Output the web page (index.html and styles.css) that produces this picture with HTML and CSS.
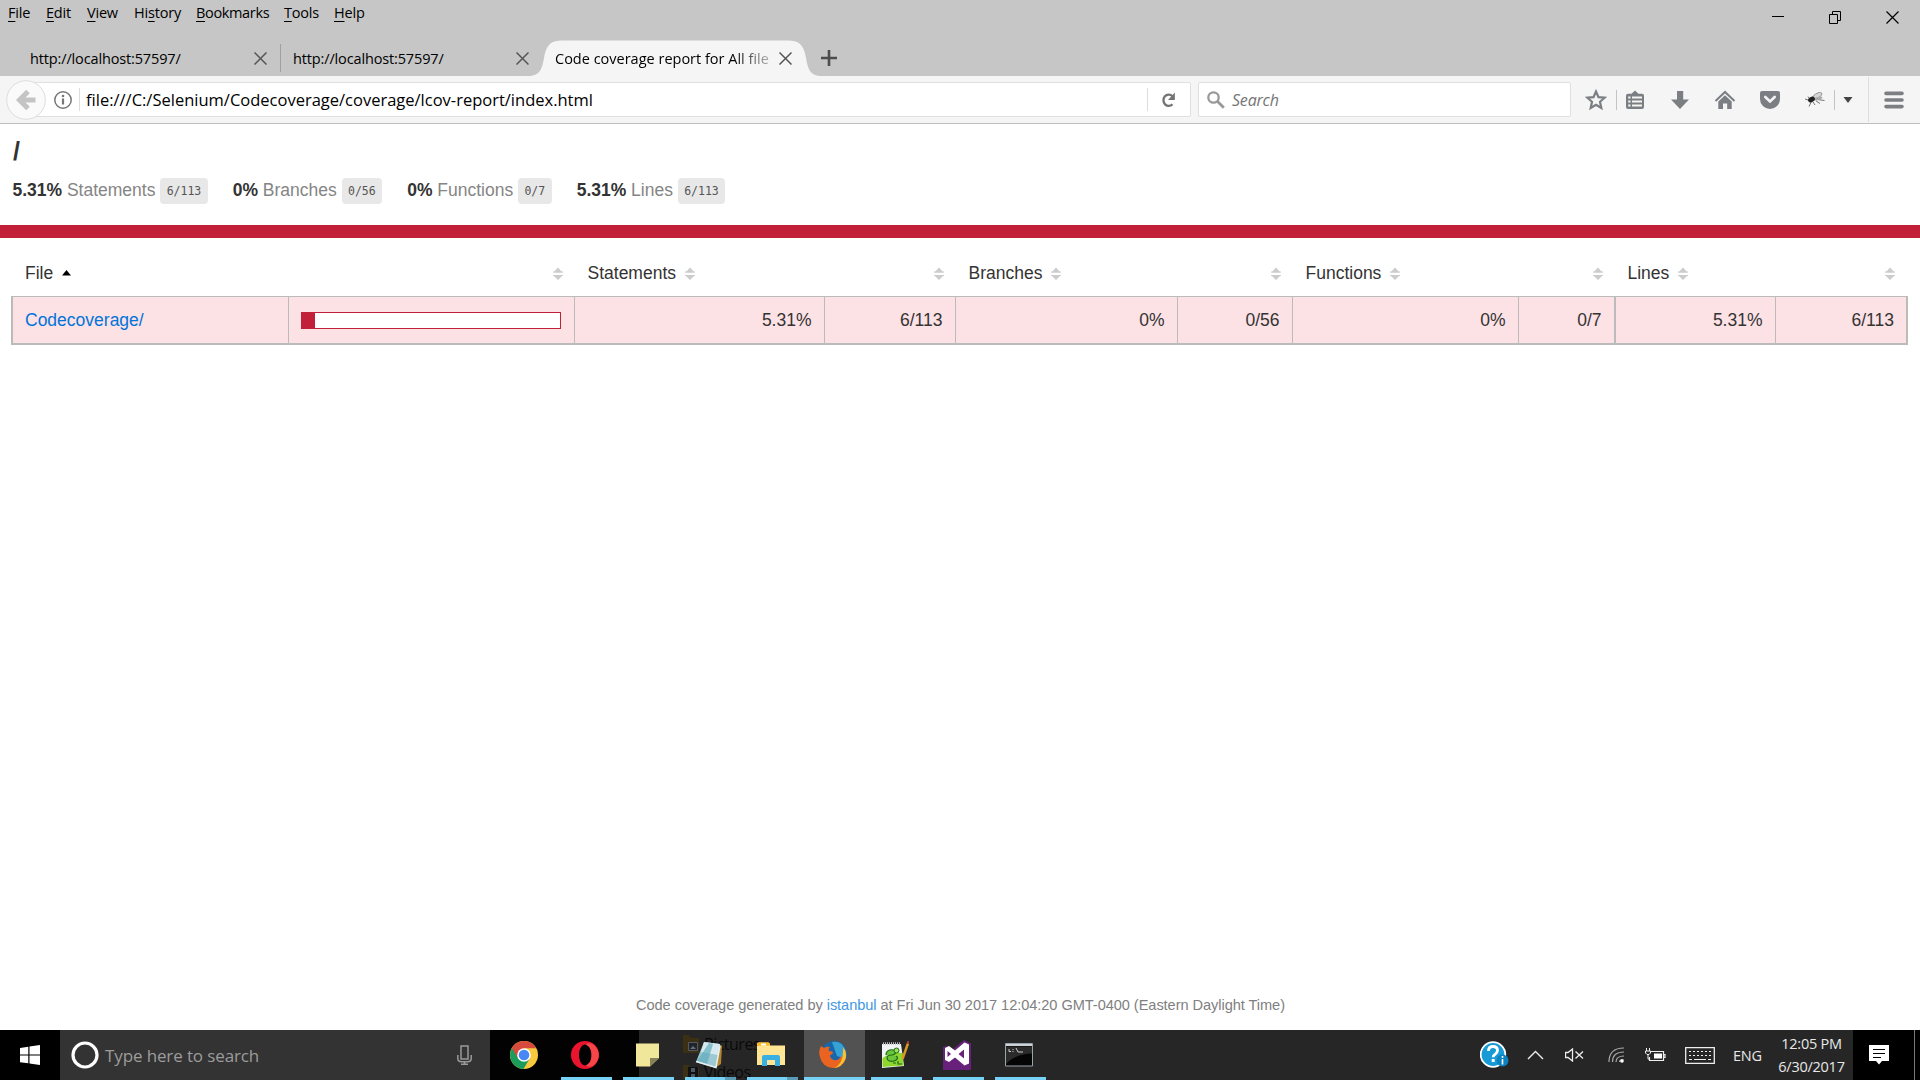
FILE: index.html
```html
<!DOCTYPE html>
<html lang="en">
<head>
<meta charset="utf-8">
<title>Code coverage report for All files</title>
<link rel="stylesheet" href="styles.css">
</head>
<body>
<svg class="defs" width="0" height="0">
  <symbol id="close" viewBox="0 0 13 13"><path d="M.5.5l12 12M12.5.5l-12 12" fill="none" stroke="#555" stroke-width="1.5"/></symbol>
  <symbol id="sort" viewBox="0 0 10 12"><path d="M5 0l4.500 5H.5zM.5 8h9L5 12.500z" fill="#ccc"/><path d="M0 4.500h10M0 8h10" stroke="#ccc"/></symbol>
</svg>

<header class="titlebar">
  <div class="menu-row">
    <nav class="menu">
      <span class="m1"><u>F</u>ile</span><span class="m2"><u>E</u>dit</span><span class="m3"><u>V</u>iew</span><span class="m4">Hi<u>s</u>tory</span><span class="m5"><u>B</u>ookmarks</span><span class="m6"><u>T</u>ools</span><span class="m7"><u>H</u>elp</span>
    </nav>
    <div class="window-buttons">
      <svg width="13" height="13"><path d="M0 5.500h12" stroke="#000"/></svg>
      <svg width="13" height="13"><path d="M.5 3.500h8v9h-8zM3.500 3V.5h8v9H9" fill="none" stroke="#000"/></svg>
      <svg width="13" height="13"><path d="M.5.5l12 12M12.500.5l-12 12" stroke="#000" stroke-width="1.200"/></svg>
    </div>
  </div>
  <div class="tabs">
    <div class="tab tab-one"><span>http://localhost:57597/</span><svg width="13" height="13"><use href="#close"/></svg></div>
    <div class="tab tab-two"><span>http://localhost:57597/</span><svg width="13" height="13"><use href="#close"/></svg></div>
    <div class="tab tab-active">
      <svg class="tab-shape" width="294" height="36" viewBox="0 0 294 36"><path d="M0 36C12 36 14 29 16 18C18 6 22 .5 34 .5H260C272 .5 276 6 278 18C280 29 282 36 294 36z" fill="#f5f5f5"/></svg>
      <span class="fade">Code coverage report for All file</span><svg class="tab-close" width="13" height="13"><use href="#close"/></svg>
    </div>
    <svg class="new-tab" width="16" height="16"><path d="M8 0v16M0 8h16" stroke="#4d4d4d" stroke-width="2.600"/></svg>
  </div>
</header>

<div class="toolbar">
  <svg class="back" width="40" height="40"><circle cx="20" cy="20" r="19.300" fill="#fafafa" stroke="#ddd"/><path d="M22 11.500L13.500 20L22 28.500M14 20h15.500" fill="none" stroke="#c4c4c4" stroke-width="5"/></svg>
  <div class="url">
    <svg width="18" height="18"><circle cx="9" cy="9" r="8.200" fill="none" stroke="#777" stroke-width="1.500"/><path d="M9 7.500v6" stroke="#777" stroke-width="2.200"/><circle cx="9" cy="5" r="1.300" fill="#777"/></svg>
    <i class="bar"></i>
    <span class="address">file:///C:/Selenium/Codecoverage/coverage/lcov-report/index.html</span>
    <i class="bar reload-bar"></i>
    <svg width="15" height="16"><path d="M11.500 12.300A5.300 5.700 0 1 1 11.300 4" fill="none" stroke="#737373" stroke-width="2.300"/><path d="M13.800.5V8H7z" fill="#737373"/></svg>
  </div>
  <div class="search">
    <svg width="18" height="18"><circle cx="6.500" cy="6.500" r="5.200" fill="none" stroke="#999" stroke-width="2.300"/><path d="M10.300 10.300l6.500 6.500" stroke="#999" stroke-width="2.800"/></svg>
    <span>Search</span>
  </div>
  <div class="tools">
    <svg class="t-star" width="22" height="22"><path d="M11 2.500l2.500 5.600 6.100.6-4.600 4.100 1.300 6.100L11 15.700l-5.300 3.200L7 12.800 2.400 8.700l6.100-.6z" fill="none" stroke="#7b7e82" stroke-width="2.200"/></svg>
    <i class="tool-bar"></i>
    <svg class="t-list" width="20" height="20"><path d="M3 3.800h3.500L10 .5l3.500 3.300H17A2 2 0 0 1 19 5.800V17a2 2 0 0 1-2 2H3a2 2 0 0 1-2-2V5.800a2 2 0 0 1 2-2z" fill="#7b7e82"/><path d="M3.200 7.500h2.300M7 7.500h10M3.200 11.500h2.300M7 11.500h10M3.200 15.500h2.300M7 15.500h10" stroke="#f5f5f5" stroke-width="2"/></svg>
    <svg class="t-down" width="20" height="20"><path d="M7 1h6.200v8.500H19L10 19 1 9.500h6z" fill="#7b7e82"/></svg>
    <svg class="t-home" width="22" height="20"><path d="M1.500 11L11 2l9.500 9" fill="none" stroke="#7b7e82" stroke-width="2"/><path d="M4.300 11.500L11 5.200l6.700 6.300V19h-4.500v-5.500H9V19H4.300z" fill="#7b7e82"/></svg>
    <svg class="t-pocket" width="22" height="20"><path d="M3 1h16q2 0 2 2v6a10 10 0 0 1-20 0V3q0-2 2-2z" fill="#7b7e82"/><path d="M6.300 7L11 11.500 15.700 7" fill="none" stroke="#f5f5f5" stroke-width="2.600" stroke-linecap="round"/></svg>
    <svg class="t-fly" width="20" height="18"><path d="M0 8l6 2M4 15.500l2.500-5M12 8.500l7.500 1M8 11l2 3M11 10l4 2.500M3 5.500l2 3" stroke="#666" stroke-width=".9"/><ellipse cx="12" cy="5" rx="5.500" ry="2.400" transform="rotate(-32 12 5)" fill="#d5d5d5" stroke="#888" stroke-width=".8"/><ellipse cx="13" cy="7.500" rx="4.500" ry="1.600" transform="rotate(-15 13 7.500)" fill="#aaa"/><ellipse cx="6.500" cy="8.500" rx="3.600" ry="2.600" transform="rotate(-30 6.500 8.500)" fill="#222"/></svg>
    <i class="tool-bar"></i>
    <svg class="t-caret" width="10" height="6"><path d="M.5 0h9L5 6z" fill="#444"/></svg>
    <i class="tool-bar tall"></i>
    <svg class="t-menu" width="20" height="18"><path d="M2 2.400h16M2 9h16M2 15.600h16" stroke="#7b7e82" stroke-width="3.600" stroke-linecap="round"/></svg>
  </div>
</div>

<main class="report">
  <h1>/</h1>
  <div class="metrics">
    <div><b>5.31%</b> <span>Statements</span> <code>6/113</code></div>
    <div><b>0%</b> <span>Branches</span> <code>0/56</code></div>
    <div><b>0%</b> <span>Functions</span> <code>0/7</code></div>
    <div><b>5.31%</b> <span>Lines</span> <code>6/113</code></div>
  </div>
  <div class="status-line"></div>
  <table class="coverage">
    <colgroup><col class="c1"><col class="c2"><col class="c3"><col class="c4"><col class="c5"><col class="c6"><col class="c7"><col class="c8"><col class="c9"><col class="c10"></colgroup>
    <thead><tr>
      <th>File<svg class="sorted" width="9" height="6"><path d="M4.500 0L9 5.500H0z" fill="#000"/></svg></th>
      <th class="end"><svg width="10" height="13"><use href="#sort"/></svg></th>
      <th>Statements<svg width="10" height="13"><use href="#sort"/></svg></th>
      <th class="end"><svg width="10" height="13"><use href="#sort"/></svg></th>
      <th>Branches<svg width="10" height="13"><use href="#sort"/></svg></th>
      <th class="end"><svg width="10" height="13"><use href="#sort"/></svg></th>
      <th>Functions<svg width="10" height="13"><use href="#sort"/></svg></th>
      <th class="end"><svg width="10" height="13"><use href="#sort"/></svg></th>
      <th>Lines<svg width="10" height="13"><use href="#sort"/></svg></th>
      <th class="end"><svg width="10" height="13"><use href="#sort"/></svg></th>
    </tr></thead>
    <tbody><tr>
      <td class="file"><a>Codecoverage/</a></td>
      <td class="pic"><div class="chart"><div class="fill" style="width:5%"></div></div></td>
      <td>5.31%</td><td>6/113</td><td>0%</td><td>0/56</td><td>0%</td><td>0/7</td><td class="heavy">5.31%</td><td>6/113</td>
    </tr></tbody>
  </table>
  <footer>Code coverage generated by <a>istanbul</a> at Fri Jun 30 2017 12:04:20 GMT-0400 (Eastern Daylight Time)</footer>
</main>

<div class="taskbar">
  <div class="start"><svg width="20" height="20"><path d="M0 3l8.300-1.200v7.700H0zM9.500 1.600L20 0v9.500H9.500zM0 10.500h8.300v7.800L0 17.200zM9.500 10.500H20V20L9.500 18.500z" fill="#fff"/></svg></div>
  <div class="cortana">
    <svg width="28" height="28"><circle cx="14" cy="14" r="12" fill="none" stroke="#fff" stroke-width="3.200"/></svg>
    <span>Type here to search</span>
    <svg width="15" height="20"><path d="M4 1h7v13H4z" fill="none" stroke="#999" stroke-width="1.500"/><path d="M.8 10v3.500q0 3.200 3.500 3.200h6.400q3.500 0 3.500-3.200V10M7.500 17v2.500M4 19.300h7" fill="none" stroke="#999" stroke-width="1.500"/></svg>
  </div>
  <div class="apps">
    <div class="ghost">
      <div class="ghost-one"><svg width="16" height="18"><path d="M0 0h6l2 3h8v15H0z" fill="#3b3014"/><path d="M5.500 7.500h9v8h-9z" fill="#20252b" stroke="#565b61"/><path d="M7 14l3-3 3 3z" fill="#667078"/></svg><span>Pictures</span></div>
      <div class="ghost-two"><svg width="16" height="14"><path d="M0 0h6l2 3h8v11H0z" fill="#3b3014"/><path d="M5 2h10v12H5z" fill="#111"/><path d="M8 3h4v4H8zM8 9h4v4H8z" fill="#4c5866"/></svg><span>Videos</span></div>
    </div>
    <div class="app"><svg width="28" height="28" viewBox="0 0 28 28"><circle cx="14" cy="14" r="14" fill="#f9ca3e"/><path d="M14 14L1.900 7A14 14 0 0 0 13.500 28L20 17z" fill="#1a9c5b"/><path d="M14 14L8 17.500 1.900 7A14 14 0 0 1 26.200 7.300H14z" fill="#d84a3c"/><circle cx="14" cy="14" r="6.800" fill="#fff"/><circle cx="14" cy="14" r="5.300" fill="#4788f4"/></svg></div>
    <div class="app open"><svg width="28" height="28" viewBox="0 0 28 28"><path fill-rule="evenodd" d="M14 0a14 14 0 1 0 0 28a14 14 0 1 0 0-28zM14.500 3.500c4 0 6 5 6 10.500s-2 10.500-6 10.500s-6.500-5-6.500-10.500s2.500-10.500 6.500-10.500z" fill="#e9142d"/><path d="M14.500 3.500q5-3 9 1c6 6 5.500 14-.5 19.500q-4 3-8.500.5c8-3 8-18 0-21z" fill="#f5474a"/></svg></div>
    <div class="app open"><svg width="28" height="28" viewBox="0 0 28 28"><path d="M3 2.500h23v14.500l-9 8.500H3z" fill="#f1e79b"/><path d="M26 17h-9v8.500z" fill="#87825a"/></svg></div>
    <div class="app open more"><svg width="28" height="28" viewBox="0 0 28 28"><path d="M25 4l2 1-1 18-6 4z" fill="#b58630"/><path d="M9 1l16 2-4 24L1 21z" fill="#9cc9d3"/><path d="M9 1l16 2-2 11L6 11z" fill="#d4eaee"/><path d="M14 2l4 1-6 20-10-3z" fill="#5ba7b8" opacity=".65"/><path d="M1 20.500l20 6 4-22" fill="none" stroke="#e6f0f1" stroke-width="1.500"/></svg></div>
    <div class="app open more"><svg width="28" height="28" viewBox="0 0 28 28"><path d="M0 3q0-1.500 1.500-1.500H11q2 0 2 3H28V24H0z" fill="#ffe594"/><path d="M0 5V3q0-1.500 1.500-1.500H11q2 0 2 3z" fill="#fabb1f"/><path d="M4 2.500h5v2H4z" fill="#fff"/><path d="M5 25V16q0-2 2-2H21q2 0 2 2v9h-5v-6h-8v6z" fill="#39afe2"/></svg></div>
    <div class="app open active"><svg width="28" height="28" viewBox="0 0 28 28"><circle cx="15" cy="13" r="13" fill="#1966a8"/><path d="M13 1q10-2 13 8q1 4-2 8l-6-2z" fill="#35a1d5"/><path d="M2 5l3 2q3-2 6-1-2 2-1 4 4 0 4 2-1 2-3 2 0 4 4 5 5 1 7-4 2 1 1 3 4-5 1-12 4 4 3 11A13.300 13.300 0 0 1 1 16Q-1 10 2 5z" fill="#ea6320"/><path d="M24 6q5 6 2 13-3 7-11 8 10-4 9-21z" fill="#fbc02d"/></svg></div>
    <div class="app open"><svg width="28" height="28" viewBox="0 0 28 28"><path d="M1 3h19l3 22-22 2z" fill="#f1f4f4"/><path d="M1.500 17q8-6 20-5l1 12.500-21 1.500z" fill="#8fd62f"/><path d="M2 2.500h18" stroke="#bbb" stroke-width="2.500" stroke-dasharray="1 1"/><path d="M5 14c0-6 7-6 9-4s-1 4-3 4-5 0-5 3 4 4 7 3 5-3 2-5" fill="#6cc53a" stroke="#1d6b18" stroke-width="1.200"/><circle cx="15.500" cy="9.500" r="2.500" fill="#9be05a" stroke="#1d6b18"/><path d="M12 22h3M17 20v3h4" fill="none" stroke="#1d6b18" stroke-width="1.200"/><path d="M27.500 1l-6 17" stroke="#d99a25" stroke-width="2.500"/><path d="M28 0l-1 3" stroke="#a33" stroke-width="2.500"/></svg></div>
    <div class="app open"><svg width="28" height="30" viewBox="0 0 28 30"><path d="M0 7l4-1 5 4L21 0l7 3.500V30H0z" fill="#68217a"/><path fill-rule="evenodd" d="M21.500 2.500L26 4.500v19l-4.500 2-9.500-8-6 4.500-4-2v-12l4-2 6 4.500zM21 9.500L15.500 14l5.500 4.500zM4.500 11v6l3.500-3z" fill="#fff"/></svg></div>
    <div class="app open"><svg width="28" height="24" viewBox="0 0 28 24"><path d="M.5.500h27v22.500H.5z" fill="#050505" stroke="#9aa4ab"/><path d="M1 2h26" stroke="#ccd3d6" stroke-width="2"/><path d="M1 3.500h26v7Q10 11 1 21z" fill="#2b2b2b"/><path d="M4 6v2.500h2M8 6v1M8 8v1M11 5l2 4M13 9h5" stroke="#ccc" fill="none"/></svg></div>
  </div>
  <div class="tray">
    <svg class="help" width="29" height="28"><circle cx="13" cy="13.500" r="12.300" fill="#189ad6" stroke="#fff" stroke-width="1.800"/><path d="M8.500 10q0-4.500 4.500-4.500t4.500 4q0 2-2.500 3.800-1.800 1.200-1.800 3M11.700 19.500h3" fill="none" stroke="#fff" stroke-width="2.800"/><circle cx="22.500" cy="19.500" r="6" fill="#0c83c0"/><path d="M22.500 18v5.500M22.500 15v2" stroke="#fff" stroke-width="1.600"/></svg>
    <svg class="chevron" width="17" height="10"><path d="M1 9l7.500-7.500L16 9" fill="none" stroke="#eee" stroke-width="1.400"/></svg>
    <svg class="speaker" width="19" height="14"><path d="M.5 4.500h2.500L7.500 1v12L3 9.500H.5z" fill="none" stroke="#eee" stroke-width="1.300"/><path d="M10.500 3.500l7.500 7M18 3.500l-7.500 7" stroke="#eee" stroke-width="1.300"/></svg>
    <svg class="wifi" width="17" height="16"><path d="M1 15Q1 1 16 1M4.500 15Q4.500 5 16 5M8 15q0-6 8-6M11.500 15q0-2.500 4-2.500" fill="none" stroke="#aaa" stroke-width="1.200"/><circle cx="14" cy="14" r="1.800" fill="#fff"/></svg>
    <svg class="battery" width="21" height="14"><path d="M6 3.500h12.500v9h-14V9M18.500 6.500h1.500v3h-1.500" fill="none" stroke="#eee" stroke-width="1.200"/><path d="M9 5.500h8v5H9z" fill="#fff"/><path d="M1.500 0v3M4.500 0v3M.5 3h5v2L4 6.500H2L.5 5zM3 7v4h2" fill="none" stroke="#eee"/></svg>
    <svg class="keyboard" width="30" height="17"><path d="M.7.700h28.600v15.600H.7z" fill="none" stroke="#eee" stroke-width="1.300"/><path d="M4 4.500h22M4 8.500h22" stroke="#eee" stroke-dasharray="2 2"/><path d="M4 12.500h3M9 12.500h12M23 12.500h3" stroke="#eee"/></svg>
    <span class="lang">ENG</span>
    <div class="clock"><span class="time">12:05 PM</span><span class="date">6/30/2017</span></div>
    <div class="notice"><svg width="20" height="20"><path d="M0 0h20v16h-7l-3 3.500L7 16H0z" fill="#fff"/><path d="M4 4.500h12M4 8.500h12M4 12.500h8" stroke="#000" stroke-width="1.200"/></svg></div>
    <div class="desktop"></div>
  </div>
</div>
</body>
</html>
```
FILE: styles.css
```css
* { box-sizing: border-box; }
body {
  margin: 0;
  width: 1920px;
  height: 1080px;
  overflow: hidden;
  display: flex;
  flex-direction: column;
  background: #fff;
  font-family: "Open Sans", "Noto Sans", sans-serif;
  color: #000;
}
svg { display: block; flex: none; }
.defs { position: absolute; }

.titlebar { height: 76px; background: #c6c6c6; display: flex; flex-direction: column; }
.menu-row { height: 40px; display: flex; justify-content: space-between; align-items: flex-start; }
.menu { display: flex; padding-left: 8px; font-size: 14.5px; line-height: 26px; letter-spacing: -.2px; white-space: nowrap; }
.menu u { text-underline-offset: 3px; text-decoration-thickness: 1px; }
.m1 { width: 38px; } .m2 { width: 41px; } .m3 { width: 47px; } .m4 { width: 62px; }
.m5 { width: 88px; letter-spacing: -.35px; } .m6 { width: 50px; }
.window-buttons { display: flex; gap: 44px; padding: 11px 21px 0 0; }
.tabs { height: 36px; display: flex; }
.tab { display: flex; align-items: center; justify-content: space-between; font-size: 14.5px; letter-spacing: -.14px; white-space: nowrap; }
.tab-one { width: 281px; padding: 0 14px 0 30px; background: linear-gradient(#a0a0a0, #a0a0a0) 280px 4px / 1px 28px no-repeat; }
.tab-two { width: 248px; padding-left: 12px; }
.tab-active { width: 294px; margin-left: -1px; position: relative; padding: 0 30px 0 27px; letter-spacing: 0; }
.tab-shape { position: absolute; left: 0; top: 0; }
.tab-close { position: relative; }
.fade { position: relative; width: 216px; overflow: hidden; -webkit-mask-image: linear-gradient(90deg, #000 178px, transparent 228px); mask-image: linear-gradient(90deg, #000 178px, transparent 228px); }
.new-tab { margin: 10px 0 0 -1px; }

.toolbar { height: 48px; padding: 0 15px 0 6px; background: #f5f5f5; border-bottom: 1px solid #bfbfbf; display: flex; align-items: center; }
.back { z-index: 1; }
.url { width: 1165px; height: 35px; margin-left: -20px; padding: 0 14px 0 27px; display: flex; align-items: center; background: #fff; border: 1px solid #e0e0e0; border-radius: 2px; }
.bar { width: 1px; height: 23px; background: #ddd; margin: 0 6px 0 7px; }
.address { flex: 1; font-size: 16.5px; letter-spacing: 0; white-space: nowrap; }
.reload-bar { margin: 0 13px 0 0; }
.search { width: 373px; height: 35px; margin-left: 7px; padding-left: 8px; gap: 7px; display: flex; align-items: center; background: #fff; border: 1px solid #e0e0e0; border-radius: 2px; font-size: 16px; font-style: italic; color: #757575; letter-spacing: -.2px; }
.tools { flex: 1; height: 47px; display: flex; align-items: center; padding-left: 14px; }
.tool-bar { width: 1px; height: 20px; background: #c4c4c4; }
.tool-bar.tall { height: 45px; margin-left: 15px; background: #ddd; }
.t-star { margin-right: 9px; }
.t-list { margin-left: 8px; }
.t-down { margin-left: 25px; }
.t-home { margin-left: 24px; }
.t-pocket { margin-left: 23px; }
.t-fly { margin: 0 9px 0 24px; }
.t-caret { margin-left: 8px; }
.t-menu { margin-left: 15px; }

.report { height: 906px; display: flex; flex-direction: column; font-family: "Liberation Sans", Arial, sans-serif; font-size: 17.5px; letter-spacing: 0; color: #333; }
h1 { margin: 12px 0 1px 13px; font-size: 25px; line-height: 30px; height: 30px; font-weight: bold; }
.metrics { display: flex; gap: 25px; height: 58px; padding: 11px 0 0 12.5px; }
.metrics div { display: flex; align-items: center; height: 26px; gap: 4.75px; white-space: nowrap; }
.metrics b, .metrics span { line-height: 24px; height: 26px; }
.metrics span { color: #858585; }
code { height: 26px; padding: 0 6.5px; background: #e8e8e8; border-radius: 4px; font: 11.5px/26px "DejaVu Sans Mono", monospace; letter-spacing: 0; color: #555; }
.status-line { height: 13px; background: #c21f39; }
.coverage { width: 1897px; margin-left: 11px; table-layout: fixed; border-spacing: 0; }
.c1 { width: 277px; } .c2 { width: 286px; } .c3 { width: 250px; } .c4 { width: 131px; } .c5 { width: 222px; }
.c6 { width: 115px; } .c7 { width: 226px; } .c8 { width: 96px; } .c9 { width: 161px; } .c10 { width: 133px; }
th { height: 58px; padding: 12px 11px 0 13.5px; text-align: left; font-weight: normal; white-space: nowrap; }
th svg { display: inline-block; margin-left: 8.5px; vertical-align: -1px; }
th .sorted { vertical-align: 3px; }
th:first-child { padding-left: 14px; }
th.end { text-align: right; }
th:last-child { padding-right: 13px; }
td { height: 49px; padding: 0 12.5px 0 12px; text-align: right; background: #fce1e5; border: solid #bbb; border-width: 1px 0 2px 1px; }
td.file { border-left-width: 2px; text-align: left; }
td.pic { padding-right: 13px; }
td.heavy { border-left-width: 2px; }
td:last-child { border-right-width: 2px; padding-right: 12px; }
.file a { color: #0074d9; }
.chart { height: 17px; background: #fff; border: 1px solid #c21f39; }
.fill { height: 15px; background: #c21f39; }
footer { margin: auto 0 16px; padding-left: 1px; text-align: center; font-size: 14.6px; line-height: 17px; letter-spacing: -.06px; color: #808080; }
footer a { color: #4297e3; }

.taskbar { height: 50px; background: #262626; display: flex; }
.start { width: 60px; background: #000; display: grid; place-items: center; }
.cortana { width: 430px; background: #333; display: flex; align-items: center; padding: 0 18px 0 11px; font-size: 17px; letter-spacing: -.12px; color: #9c9c9c; }
.cortana span { flex: 1; padding-left: 6px; }
.apps { position: relative; flex: 1; display: flex; padding-left: 3px; background: linear-gradient(90deg, #020202 149px, transparent 149px); }
.app { position: relative; width: 62px; display: grid; place-items: center; }
.open { padding-right: 2px; }
.open::after { content: ""; position: absolute; bottom: 0; left: 6px; width: 51px; height: 3px; background: #76d1f6; }
.more::after { background: linear-gradient(90deg, #76d1f6 40px, #5a9bb5 40px); }
.active { background: linear-gradient(90deg, transparent 1px, #525252 1px); }
.active::after { left: 1px; width: 61px; }
.ghost { position: absolute; left: 193px; top: 0; height: 50px; font-size: 16px; letter-spacing: -.5px; color: #090909; }
.ghost div { display: flex; align-items: center; gap: 5px; }
.ghost-one { height: 28px; line-height: 22px; }
.ghost-two { height: 14px; margin-top: 7px; line-height: 14px; }
.tray { width: 440px; display: flex; align-items: center; color: #e8e8e8; }
.chevron { margin-left: 18px; }
.speaker { margin-left: 21px; }
.wifi { margin-left: 24px; }
.battery { margin-left: 20px; }
.keyboard { margin-left: 19px; }
.lang { width: 45px; padding-left: 18px; font-size: 14.5px; letter-spacing: -.2px; }
.clock { width: 93px; padding-left: 10px; display: flex; flex-direction: column; align-items: center; font-size: 14.5px; line-height: 23px; letter-spacing: -.25px; }
.notice { width: 61px; height: 50px; padding-left: 16px; display: flex; align-items: center; background: #000; }
.desktop { flex: 1; height: 50px; background: #000; border-left: 1px solid #777; }
```
